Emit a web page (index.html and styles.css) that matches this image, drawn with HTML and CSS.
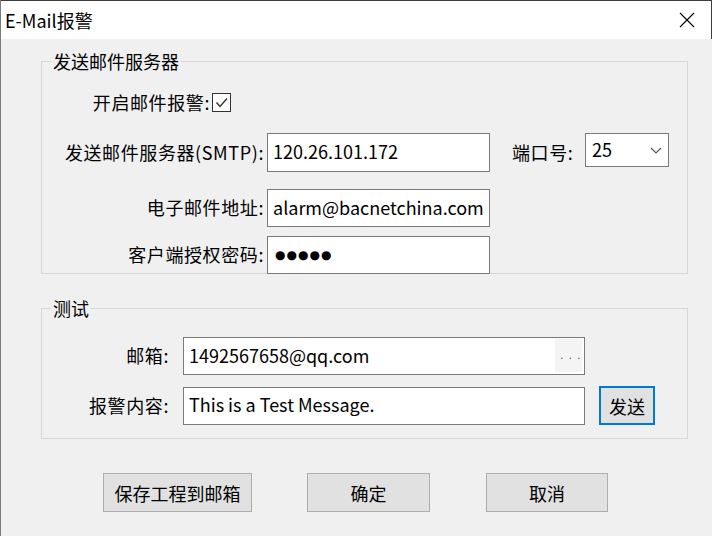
FILE: index.html
```html
<!DOCTYPE html>
<html lang="zh-CN">
<head>
<meta charset="utf-8">
<title>E-Mail报警</title>
<link rel="stylesheet" href="styles.css">
</head>
<body>
<div class="window">
  <div class="titlebar">
    <span class="title">E-Mail报警</span>
    <svg class="close" viewBox="0 0 16 16"><path d="M1 1L15 15M15 1L1 15" stroke="#000" stroke-width="1.1" fill="none"/></svg>
  </div>
  <div class="main">
    <fieldset class="group g1">
      <legend>发送邮件服务器</legend>
      <div class="row r-enable">
        <span class="label l-enable">开启邮件报警:</span>
        <span class="checkbox"><svg viewBox="0 0 17 17"><path d="M3.5 8.5L7 12.5L14 4.5" stroke="#333" stroke-width="1.4" fill="none"/></svg></span>
      </div>
      <div class="row r-smtp">
        <span class="label l-wide">发送邮件服务器(SMTP):</span>
        <div class="edit e-short e-tall">120.26.101.172</div>
        <span class="label l-port">端口号:</span>
        <div class="combo"><span class="combo-text">25</span><svg class="chev" viewBox="0 0 12 7"><path d="M1 1L6 6L11 1" stroke="#555" stroke-width="1.2" fill="none"/></svg></div>
      </div>
      <div class="row r-mail">
        <span class="label l-wide">电子邮件地址:</span>
        <div class="edit e-short">alarm@bacnetchina.com</div>
      </div>
      <div class="row r-pass">
        <span class="label l-wide">客户端授权密码:</span>
        <div class="edit e-short pass">●●●●●</div>
      </div>
    </fieldset>
    <fieldset class="group g2">
      <legend>测试</legend>
      <div class="row r-box">
        <span class="label l-test">邮箱:</span>
        <div class="edit e-long"><span class="edit-text">1492567658@qq.com</span><span class="browse">...</span></div>
      </div>
      <div class="row r-msg">
        <span class="label l-test">报警内容:</span>
        <div class="edit e-long">This is a Test Message.</div>
        <button class="btn send">发送</button>
      </div>
    </fieldset>
    <div class="actions">
      <button class="btn b-save">保存工程到邮箱</button>
      <button class="btn b-ok">确定</button>
      <button class="btn b-cancel">取消</button>
    </div>
  </div>
</div>
</body>
</html>
```
FILE: styles.css
```css
* { box-sizing: border-box; }
html, body { margin: 0; padding: 0; }
body {
  font-family: "Noto Sans CJK SC", "Noto Sans", sans-serif;
  font-size: 18px;
  color: #000;
  background: #f0f0f0;
}
.window {
  width: 712px;
  height: 536px;
  background: #f0f0f0;
  border-left: 1px solid #7a7a7a;
  overflow: hidden;
}
.titlebar {
  height: 39px;
  background: #fff;
  border-top: 1px solid #3c3c3c;
  border-right: 1px solid #3c3c3c;
  display: flex;
  align-items: center;
  padding-left: 4px;
}
.title { flex: 1; font-size: 18px; line-height: 24px; }
.close { width: 16px; height: 16px; margin-right: 16px; }

.main { padding: 11px 0 0 40px; }

.group {
  margin: 0;
  padding: 0;
  min-width: 0;
  width: 647px;
  border: 1px solid #d7d7d7;
}
.group legend {
  margin-left: 9px;
  padding: 0 2px;
  font-size: 18px;
  line-height: 23px;
}
.row { display: flex; align-items: center; }
.label {
  line-height: 24px;
  white-space: nowrap;
  letter-spacing: 0.6px;
  padding-bottom: 2px;
}

.r-enable { margin-top: 20px; height: 19px; }
.l-enable { width: 168px; text-align: right; }
.checkbox {
  width: 19px;
  height: 19px;
  margin-left: 2px;
  border: 1px solid #333;
  background: #fff;
  display: flex;
}
.checkbox svg { width: 17px; height: 17px; }

.r-smtp { margin-top: 21px; }
.l-wide { width: 222px; text-align: right; }
.edit {
  background: #fff;
  border: 1px solid #7a7a7a;
  padding-left: 5px;
  padding-bottom: 3px;
  display: flex;
  align-items: center;
  height: 38px;
  line-height: 24px;
  white-space: nowrap;
}
.e-short { width: 223px; margin-left: 3px; }
.e-tall { height: 39px; }
.l-port { margin-left: 22px; width: 73px; text-align: left; }
.combo {
  align-self: flex-start;
  width: 84px;
  height: 34px;
  border: 1px solid #7a7a7a;
  background: #fff;
  display: flex;
  align-items: center;
  padding-left: 6px;
  padding-bottom: 2px;
  line-height: 24px;
}
.chev { width: 12px; height: 7px; margin-left: auto; margin-right: 6px; margin-top: 2px; }

.r-mail { margin-top: 17px; }
.r-pass { margin-top: 9px; margin-bottom: -1px; }
.pass {
  font-family: "DejaVu Sans", sans-serif;
  font-size: 12px;
  letter-spacing: 1px;
  padding-left: 7px;
  padding-bottom: 1px;
}

.g2 { margin-top: 23px; padding-bottom: 13px; }
.r-box { margin-top: 17px; }
.l-test { width: 127px; text-align: right; }
.e-long { width: 402px; margin-left: 14px; }
.edit-text { flex: 1; }
.browse {
  align-self: flex-end;
  width: 27px;
  height: 33px;
  margin-right: 2px;
  margin-bottom: -1px;
  background: #f4f4f4;
  color: #555;
  font-family: "DejaVu Sans", sans-serif;
  font-size: 11px;
  line-height: 33px;
  text-align: center;
  letter-spacing: 5px;
  padding-left: 5px;
}
.r-msg { margin-top: 11px; }

.btn {
  font-family: inherit;
  font-size: 18px;
  line-height: 24px;
  color: #000;
  background: #e1e1e1;
  border: 1px solid #adadad;
  padding: 0;
  height: 39px;
}
.send {
  width: 56px;
  margin-left: 14px;
  border: 2px solid #0078d7;
}

.actions { display: flex; margin-top: 34px; margin-left: 62px; }
.b-save { width: 149px; }
.b-ok { width: 123px; margin-left: 55px; }
.b-cancel { width: 122px; margin-left: 56px; }
```
